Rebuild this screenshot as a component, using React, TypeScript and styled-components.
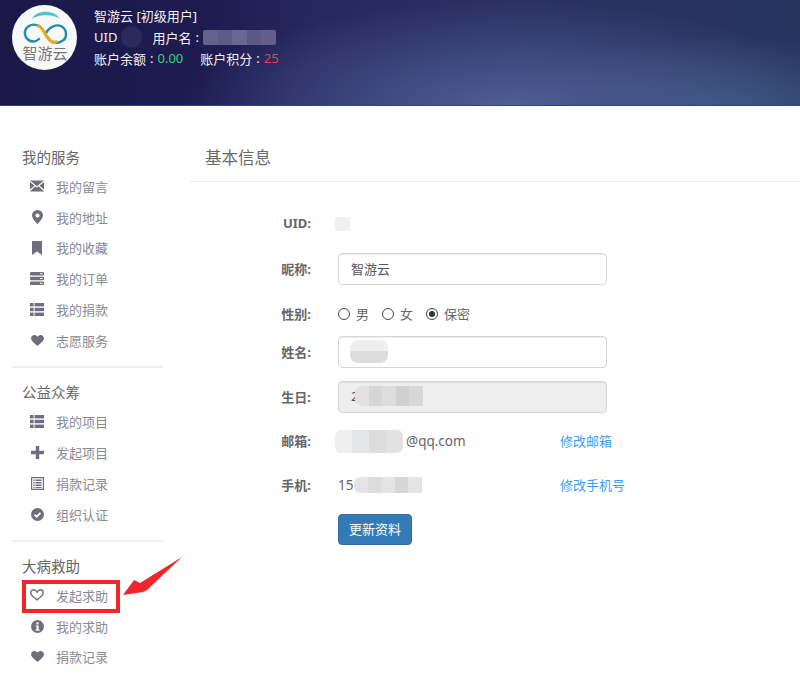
import styled, { createGlobalStyle } from "styled-components";
import type { ReactNode } from "react";

const FONT = `"Noto Sans", "Noto Sans CJK SC", sans-serif`;

const GlobalStyle = createGlobalStyle`
  html, body { margin: 0; padding: 0; background: #fff; }
  body { font-family: ${FONT}; color: #777; overflow: hidden; }
  * { box-sizing: border-box; }
`;

const Page = styled.div`
  width: 800px;
  height: 676px;
  overflow: hidden;
`;

const Header = styled.header`
  height: 106px;
  padding: 5px 12px;
  display: flex;
  align-items: flex-start;
  gap: 17px;
  color: #f2f3f8;
  border-bottom: 1px solid #2f4488;
  background:
    radial-gradient(ellipse 330px 105px at 510px 106px, rgba(80, 96, 150, 0.95), rgba(80, 96, 150, 0) 100%),
    radial-gradient(ellipse 220px 70px at 720px 106px, rgba(58, 88, 128, 0.85), rgba(58, 88, 128, 0) 100%),
    linear-gradient(90deg, #1b1849 0%, #1d1b50 25%, #27285f 40%, #2b3163 65%, #28335e 100%);
`;

const LogoDisc = styled.div`
  width: 65px;
  height: 65px;
  border-radius: 50%;
  background: #f7f8f8;
  flex: none;
`;

const UserInfo = styled.div`
  font-size: 13px;
`;

const InfoLine = styled.div`
  display: flex;
  align-items: center;
  height: 21.4px;
  white-space: nowrap;
`;

const Colon = styled.span`
  display: inline-block;
  width: 11.5px;
  text-align: center;
`;

const Amount = styled.span<{ $color: string }>`
  color: ${(p) => p.$color};
`;

const Gap = styled.span<{ $w: number }>`
  display: inline-block;
  width: ${(p) => p.$w}px;
`;

const Smudge = styled.span<{ $w: number; $h: number; $bg: string; $r?: string; $pull?: number }>`
  display: inline-block;
  width: ${(p) => p.$w}px;
  height: ${(p) => p.$h}px;
  margin-left: ${(p) => p.$pull ?? 0}px;
  background: ${(p) => p.$bg};
  border-radius: ${(p) => p.$r ?? "2px"};
  flex: none;
`;

const Body = styled.div`
  display: flex;
  align-items: flex-start;
`;

const Sidebar = styled.aside`
  width: 190px;
  flex: none;
  padding: 40px 27px 0 12px;
`;

const Section = styled.section`
  & + & {
    margin-top: 10.5px;
    border-top: 2px solid #eeeeee;
    padding-top: 13px;
  }
`;

const SectionTitle = styled.h4`
  margin: 0 0 0 10px;
  height: 25px;
  line-height: 23px;
  font-size: 14.5px;
  font-weight: 400;
  color: #666;
`;

const Menu = styled.ul`
  list-style: none;
  margin: 0;
  padding: 0;
`;

const MenuRow = styled.li`
  position: relative;
  display: flex;
  align-items: center;
  height: 30.8px;
  padding-left: 18px;
  font-size: 13px;
  color: #8a8a92;
`;

const IconSlot = styled.span`
  width: 14px;
  flex: none;
  display: flex;
  justify-content: center;
  margin-right: 12px;
  color: #6f6f7c;
`;

const RedBox = styled.span`
  position: absolute;
  left: 10px;
  top: 0;
  width: 98px;
  height: 33px;
  border: 4px solid #f0262c;
`;

const Arrow = styled.svg`
  position: absolute;
  left: 110px;
  top: -24px;
`;

const Main = styled.main`
  flex: 1;
  min-width: 0;
`;

const PanelHead = styled.div`
  height: 76px;
  padding: 40px 0 0 15px;
  border-bottom: 1px solid #e9e9e9;
  font-size: 16.5px;
  line-height: 24px;
  color: #6a6a6a;
`;

const Form = styled.form`
  padding: 32px 0 0 90px;
`;

const FormRow = styled.div<{ $h: number }>`
  display: flex;
  align-items: center;
  height: ${(p) => p.$h}px;
`;

const FieldLabel = styled.label`
  width: 31px;
  margin-right: 27px;
  padding-bottom: 2px;
  flex: none;
  text-align: right;
  white-space: nowrap;
  font-size: 13px;
  font-weight: 700;
  color: #666;
`;

const TextField = styled.div<{ $disabled?: boolean }>`
  width: 269px;
  height: 32px;
  padding: 0 12px 2px;
  display: flex;
  align-items: center;
  border: 1px solid #d6d6d6;
  border-radius: 4px;
  font-size: 13px;
  color: #555;
  background: ${(p) => (p.$disabled ? "#eeeeee" : "#fff")};
  box-shadow: inset 0 1px 1px rgba(0, 0, 0, 0.075);
`;

const RadioGroup = styled.div`
  display: flex;
  align-items: center;
  font-size: 13px;
  color: #666;
`;

const RadioDot = styled.span<{ $on?: boolean }>`
  width: 12px;
  height: 12px;
  border-radius: 50%;
  border: 1px solid #444;
  margin-right: 6px;
  display: flex;
  align-items: center;
  justify-content: center;
  &::after {
    content: "";
    width: 6px;
    height: 6px;
    border-radius: 50%;
    background: ${(p) => (p.$on ? "#333" : "transparent")};
  }
`;

const RadioText = styled.span`
  margin-right: 13px;
  padding-bottom: 2px;
`;

const PlainValue = styled.div`
  width: 222px;
  flex: none;
  display: flex;
  align-items: center;
  font-size: 13.5px;
  color: #666;
`;

const EditLink = styled.a`
  padding-bottom: 2px;
  font-size: 13px;
  color: #3b9df0;
  text-decoration: none;
`;

const SubmitButton = styled.button`
  margin-left: 58px;
  width: 74px;
  height: 31px;
  padding: 0 0 2px;
  border: 1px solid #2e6da4;
  border-radius: 4px;
  background: #337ab7;
  color: #fff;
  font-family: inherit;
  font-size: 13px;
`;

const Logo = () => (
  <svg width="65" height="65" viewBox="0 0 65 65">
    <path d="M20 14 C24 5 42 4 48 14 C42 9 26 9 20 14 Z" fill="#4cc3cf" />
    <path d="M27 21 C19 17 12 23 13 29 C14 36 22 39 27 34" fill="none" stroke="#1f8ea6" strokeWidth="2.4" strokeLinecap="round" />
    <path d="M34 28 C37 22 44 19 49 21 C55 24 56 33 50 36 C47 38 44 38 42 37" fill="none" stroke="#1f8ea6" strokeWidth="2.4" strokeLinecap="round" />
    <path d="M27 21 C32 24 33 30 36 33 C38 36 41 38 44 37" fill="none" stroke="#e2a92e" strokeWidth="3.2" strokeLinecap="round" />
    <text x="33" y="54" textAnchor="middle" fontSize="15" fill="#777" fontFamily={`"Noto Sans CJK SC", sans-serif`}>智游云</text>
  </svg>
);

type IconName = "mail" | "pin" | "bookmark" | "server" | "list" | "heart" | "plus" | "ledger" | "check" | "heartOutline" | "info";

const Glyph = ({ name }: { name: IconName }) => {
  switch (name) {
    case "mail":
      return (
        <svg width="15" height="12" viewBox="0 0 15 12" fill="currentColor">
          <path d="M0 0h15L7.5 6.2zM0 1.6v8.2L4.8 5.6zM15 1.6v8.2l-4.8-4.2zM5.8 6.4l1.7 1.4 1.7-1.4L15 11.6V12H0v-.4z" />
        </svg>
      );
    case "pin":
      return (
        <svg width="11" height="14" viewBox="0 0 11 14">
          <path fillRule="evenodd" fill="currentColor" d="M5.5 0A5.5 5.5 0 0 0 0 5.5C0 9 5.5 14 5.5 14S11 9 11 5.5A5.5 5.5 0 0 0 5.5 0zm0 3.4a2.1 2.1 0 1 1 0 4.2 2.1 2.1 0 0 1 0-4.2z" />
        </svg>
      );
    case "bookmark":
      return (
        <svg width="10" height="14" viewBox="0 0 10 14" fill="currentColor">
          <path d="M0 0h10v14L5 10.4 0 14z" />
        </svg>
      );
    case "server":
      return (
        <svg width="14" height="13" viewBox="0 0 14 13" fill="currentColor">
          <rect width="14" height="3.4" rx="1" />
          <rect y="4.8" width="14" height="3.4" rx="1" />
          <rect y="9.6" width="14" height="3.4" rx="1" />
          <rect x="10" y="1.2" width="2.6" height="1" fill="#fff" />
          <rect x="10" y="6" width="2.6" height="1" fill="#fff" />
          <rect x="10" y="10.8" width="2.6" height="1" fill="#fff" />
        </svg>
      );
    case "list":
      return (
        <svg width="14" height="13" viewBox="0 0 14 13" fill="currentColor">
          <rect width="3.6" height="3.4" />
          <rect x="4.6" width="9.4" height="3.4" />
          <rect y="4.8" width="3.6" height="3.4" />
          <rect x="4.6" y="4.8" width="9.4" height="3.4" />
          <rect y="9.6" width="3.6" height="3.4" />
          <rect x="4.6" y="9.6" width="9.4" height="3.4" />
        </svg>
      );
    case "heart":
      return (
        <svg width="13" height="11" viewBox="0 0 14 12" fill="currentColor">
          <path d="M7 12C5 10 0 7 0 3.6 0 1.5 1.6 0 3.6 0 5 0 6.3.8 7 2 7.7.8 9 0 10.4 0 12.4 0 14 1.5 14 3.6 14 7 9 10 7 12z" />
        </svg>
      );
    case "heartOutline":
      return (
        <svg width="14" height="12" viewBox="0 0 14 12" fill="none" stroke="currentColor" strokeWidth="1.4">
          <path d="M7 10.9C5.2 9.2 .8 6.7.8 3.7.8 2 2.1.8 3.7.8 5 .8 6.3 1.7 7 3.1 7.7 1.7 9 .8 10.3.8c1.6 0 2.9 1.2 2.9 2.9 0 3-4.4 5.5-6.2 7.2z" />
        </svg>
      );
    case "plus":
      return (
        <svg width="13" height="13" viewBox="0 0 13 13" fill="currentColor">
          <path d="M4.8 0h3.4v4.8H13v3.4H8.2V13H4.8V8.2H0V4.8h4.8z" />
        </svg>
      );
    case "ledger":
      return (
        <svg width="13" height="13" viewBox="0 0 13 13">
          <path fillRule="evenodd" fill="currentColor" d="M0 0h13v13H0zM1.2 1.2v10.6h10.6V1.2zM2.4 2.6h1.4V4H2.4zM4.6 2.6h6V4h-6zM2.4 5.1h1.4v1.4H2.4zM4.6 5.1h6v1.4h-6zM2.4 7.6h1.4V9H2.4zM4.6 7.6h6V9h-6zM2.4 10h1.4v1H2.4zM4.6 10h6v1h-6z" />
        </svg>
      );
    case "check":
      return (
        <svg width="13" height="13" viewBox="0 0 13 13">
          <circle cx="6.5" cy="6.5" r="6.5" fill="currentColor" />
          <path d="M3.6 6.6l2.1 2.1 3.8-3.8" fill="none" stroke="#fff" strokeWidth="1.7" />
        </svg>
      );
    case "info":
      return (
        <svg width="13" height="13" viewBox="0 0 13 13">
          <circle cx="6.5" cy="6.5" r="6.5" fill="currentColor" />
          <rect x="5.4" y="2.4" width="2.2" height="2" fill="#fff" />
          <path d="M4.6 5.4h3v4.2h.9v1.1H4.6V9.6h.9V6.5h-.9z" fill="#fff" />
        </svg>
      );
  }
};

const Item = ({ icon, label, children }: { icon: IconName; label: string; children?: ReactNode }) => (
  <MenuRow>
    <IconSlot>
      <Glyph name={icon} />
    </IconSlot>
    {label}
    {children}
  </MenuRow>
);

const mosaic = (colors: string[]) => {
  const step = 100 / colors.length;
  const stops = colors.map((c, i) => `${c} ${i * step}% ${(i + 1) * step}%`);
  return `linear-gradient(90deg, ${stops.join(", ")})`;
};

const App = () => {
  return (
    <Page>
      <GlobalStyle />
      <Header>
        <LogoDisc>
          <Logo />
        </LogoDisc>
        <UserInfo>
          <InfoLine>智游云 [初级用户]</InfoLine>
          <InfoLine>
            UID
            <Gap $w={4} />
            <Smudge $w={21} $h={22} $bg="#2c2a5c" $r="11px" />
            <Gap $w={10} />
            用户名<Colon>:</Colon>
            <Smudge $w={73} $h={15} $bg={mosaic(["#64628c", "#5c5a86", "#6a6892", "#5a5884", "#625f8a"])} />
          </InfoLine>
          <InfoLine>
            账户余额<Colon>:</Colon>
            <Amount $color="#2fd676">0.00</Amount>
            <Gap $w={17} />
            账户积分<Colon>:</Colon>
            <Amount $color="#f53a40">25</Amount>
          </InfoLine>
        </UserInfo>
      </Header>
      <Body>
        <Sidebar>
          <Section>
            <SectionTitle>我的服务</SectionTitle>
            <Menu>
              <Item icon="mail" label="我的留言" />
              <Item icon="pin" label="我的地址" />
              <Item icon="bookmark" label="我的收藏" />
              <Item icon="server" label="我的订单" />
              <Item icon="list" label="我的捐款" />
              <Item icon="heart" label="志愿服务" />
            </Menu>
          </Section>
          <Section>
            <SectionTitle>公益众筹</SectionTitle>
            <Menu>
              <Item icon="list" label="我的项目" />
              <Item icon="plus" label="发起项目" />
              <Item icon="ledger" label="捐款记录" />
              <Item icon="check" label="组织认证" />
            </Menu>
          </Section>
          <Section>
            <SectionTitle>大病救助</SectionTitle>
            <Menu>
              <Item icon="heartOutline" label="发起求助">
                <RedBox />
                <Arrow width="64" height="44" viewBox="0 0 64 44">
                  <path d="M1 39 L12 24 L18 27 L60 1 L25 34 L21 36 Z" fill="#f0262c" />
                </Arrow>
              </Item>
              <Item icon="info" label="我的求助" />
              <Item icon="heart" label="捐款记录" />
            </Menu>
          </Section>
        </Sidebar>
        <Main>
          <PanelHead>基本信息</PanelHead>
          <Form>
            <FormRow $h={20}>
              <FieldLabel>UID:</FieldLabel>
              <Smudge $w={15} $h={14} $bg="#f0f0f0" $pull={-3} />
            </FormRow>
            <FormRow $h={70}>
              <FieldLabel>昵称:</FieldLabel>
              <TextField>智游云</TextField>
            </FormRow>
            <FormRow $h={20}>
              <FieldLabel>性别:</FieldLabel>
              <RadioGroup>
                <RadioDot />
                <RadioText>男</RadioText>
                <RadioDot />
                <RadioText>女</RadioText>
                <RadioDot $on />
                <RadioText>保密</RadioText>
              </RadioGroup>
            </FormRow>
            <FormRow $h={56}>
              <FieldLabel>姓名:</FieldLabel>
              <TextField>
                <Smudge $w={38} $h={23} $bg="linear-gradient(180deg, #efefef 0 50%, #dcdcdc 50% 100%)" $r="8px" $pull={-1} />
              </TextField>
            </FormRow>
            <FormRow $h={34}>
              <FieldLabel>生日:</FieldLabel>
              <TextField $disabled>
                2
                <Smudge $w={68} $h={20} $bg={mosaic(["#e2e2e2", "#d6d6d6", "#dedede", "#d0d0d0", "#d8d8d8"])} $r="6px 0 0 6px" $pull={-3} />
              </TextField>
            </FormRow>
            <FormRow $h={54}>
              <FieldLabel>邮箱:</FieldLabel>
              <PlainValue>
                <Smudge $w={68} $h={23} $bg={mosaic(["#eeeeee", "#e4e6e9", "#dcdcdc", "#e2e2e2"])} $r="6px" $pull={-3} />
                <Gap $w={3} />
                @qq.com
              </PlainValue>
              <EditLink href="#">修改邮箱</EditLink>
            </FormRow>
            <FormRow $h={34}>
              <FieldLabel>手机:</FieldLabel>
              <PlainValue>
                15
                <Smudge $w={68} $h={16} $bg={mosaic(["#e4e4e4", "#dcdcdc", "#e4e4e4", "#d6d6d6", "#e4e4e4"])} $r="6px 0 0 6px" $pull={1} />
              </PlainValue>
              <EditLink href="#">修改手机号</EditLink>
            </FormRow>
            <FormRow $h={54}>
              <SubmitButton type="button">更新资料</SubmitButton>
            </FormRow>
          </Form>
        </Main>
      </Body>
    </Page>
  );
};

export default App;
